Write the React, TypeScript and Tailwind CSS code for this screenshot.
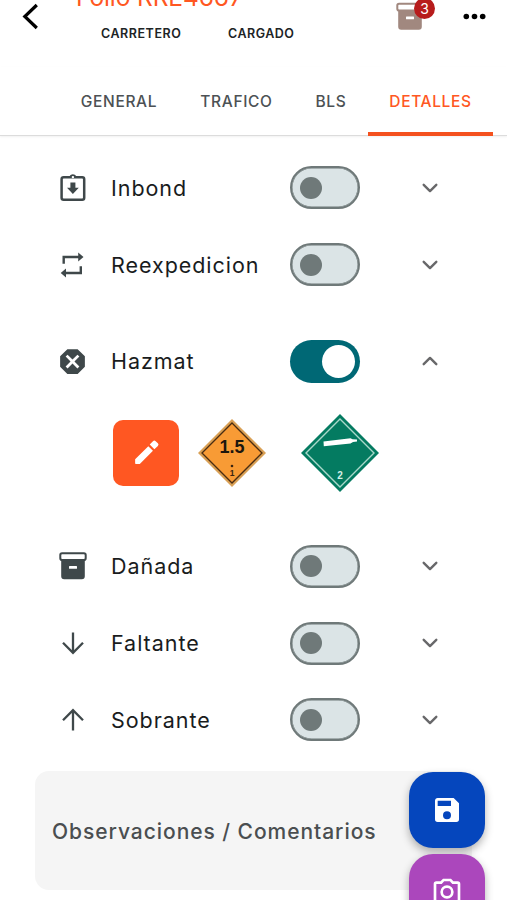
import { useState, type ReactNode } from 'react';

type SectionKey = 'inbond' | 'reexpedicion' | 'hazmat' | 'danada' | 'faltante' | 'sobrante';

const TABS = [
  { label: 'GENERAL', box: 'w-[127px] pl-[1px]' },
  { label: 'TRAFICO', box: 'w-[108px] pl-[1px]' },
  { label: 'BLS', box: 'w-[78px] pl-[4px]' },
  { label: 'DETALLES', box: 'w-[125px]' },
];

function ArchiveIcon({ className }: { className: string }) {
  return (
    <svg viewBox="0 0 28 28" className={className} fill="none">
      <rect x="1.300" y="1.300" width="25.400" height="6.800" rx="1.800" stroke="currentColor" strokeWidth="2" fill="white" />
      <path d="M2.200 8.500h23.600v15.700a3 3 0 0 1-3 3H5.200a3 3 0 0 1-3-3z" fill="currentColor" />
      <rect x="10" y="14" width="8" height="2.800" rx=".5" fill="white" />
    </svg>
  );
}

function InbondIcon() {
  return (
    <svg viewBox="0 0 28 30" className="h-[30px] w-7" fill="none">
      <rect x="2.600" y="4.300" width="22.600" height="22.400" rx="2" stroke="currentColor" strokeWidth="2.500" />
      <path d="M9.800 4.700C10.500 3.300 11 2.300 12 1.700a4 4 0 0 1 3.800 0c1 .6 1.500 1.600 2.200 3z" fill="currentColor" />
      <circle cx="13.900" cy="4.100" r="1.200" fill="white" />
      <path d="M11.400 9.500h5v5.300h3.400l-5.900 6.200L8 14.800h3.400z" fill="currentColor" />
    </svg>
  );
}

function RepeatIcon() {
  return (
    <svg viewBox="0 0 28 28" className="h-7 w-7" fill="currentColor">
      <path d="M3.500 4.800h15.700V1.500L24.500 6l-5.300 4.500V7.200H5.900v5.600H3.500zM23 23.200H7v3.300L1.700 22 7 17.500v3.300h13.600v-5.600H23z" />
    </svg>
  );
}

function OctagonIcon() {
  return (
    <svg viewBox="0 0 24 24" className="h-[33px] w-[33px]" fill="currentColor">
      <path d="M8.270 3L3 8.270v7.460L8.270 21h7.460L21 15.730V8.270L15.730 3M8.410 7L12 10.590 15.590 7 17 8.410 13.410 12 17 15.590 15.590 17 12 13.410 8.410 17 7 15.590 10.590 12 7 8.410" />
    </svg>
  );
}

function ArrowIcon({ up }: { up?: boolean }) {
  return (
    <svg viewBox="0 0 28 28" className={up ? 'h-7 w-7 rotate-180' : 'h-7 w-7'} fill="none" stroke="currentColor" strokeWidth="2.300">
      <path d="M14 3.500V23.500M4 13.800l10 10 10-10" />
    </svg>
  );
}

function Chevron({ open }: { open: boolean }) {
  return (
    <svg
      viewBox="0 0 20 20"
      className={open ? 'size-5 rotate-180' : 'size-5'}
      fill="none"
      stroke="#68686a"
      strokeWidth="2.400"
      strokeLinecap="round"
      strokeLinejoin="round"
    >
      <path d="M3.700 6.800L10 13.100l6.300-6.300" />
    </svg>
  );
}

function Toggle({ on, onChange }: { on: boolean; onChange: () => void }) {
  return (
    <button
      role="switch"
      aria-checked={on}
      onClick={onChange}
      className={
        on
          ? 'flex h-[43px] w-[70px] items-center justify-end rounded-full bg-[#006875] pr-[5px]'
          : 'flex h-[43px] w-[70px] items-center rounded-full border-2 border-[#6f7979] bg-[#dbe4e6] pl-[8px] shadow-[inset_0_0_0_0.5px_#6f7979]'
      }
    >
      <span className={on ? 'size-[33px] rounded-full bg-white' : 'size-[22px] rounded-full bg-[#6f7979]'} />
    </button>
  );
}

type RowProps = {
  icon: ReactNode;
  label: string;
  on: boolean;
  onToggle: () => void;
};

function Row({ icon, label, on, onToggle }: RowProps) {
  return (
    <div className="flex h-[76.7px] items-center">
      <span className="ml-14 flex w-[33px] justify-center text-[#3f484a]">{icon}</span>
      <span className="ml-[22px] w-[179px] text-[21.5px] leading-7 tracking-[0.95px] text-[#191c1d]">{label}</span>
      <Toggle on={on} onChange={onToggle} />
      <span className="ml-[60px]">
        <Chevron open={on} />
      </span>
    </div>
  );
}

function ExplosivePlacard() {
  return (
    <svg viewBox="0 0 70 70" className="size-[70px] font-['Liberation_Sans',sans-serif]">
      <path d="M35 1L69 35 35 69 1 35z" fill="#d9a055" />
      <path d="M35 5L65 35 35 65 5 35z" fill="#f89b35" stroke="#4b2d12" strokeWidth="1.300" />
      <text x="35" y="35" textAnchor="middle" fontSize="18" fontWeight="700" fill="#1c160e">1.5</text>
      <circle cx="35" cy="48" r="1.300" fill="#3a2410" />
      <text x="35" y="57.500" textAnchor="middle" fontSize="8.500" fontWeight="700" fill="#3a2410">1</text>
    </svg>
  );
}

function GasPlacard() {
  return (
    <svg viewBox="0 0 80 80" className="size-20 font-['Liberation_Sans',sans-serif]">
      <path d="M40 1L79 40 40 79 1 40z" fill="#047b61" />
      <path d="M40 6L74 40 40 74 6 40z" fill="none" stroke="#a9d8ca" strokeWidth="1.400" />
      <path d="M23.500 28.500L50.500 25.300l2 1 4.500.3v2l-4 .5-2.500 1.500-26.700 2.600z" fill="white" />
      <text x="40" y="65.500" textAnchor="middle" fontSize="10" fontWeight="700" fill="#d5efe7">2</text>
    </svg>
  );
}

export default function App() {
  const [active, setActive] = useState('DETALLES');
  const [flags, setFlags] = useState<Record<SectionKey, boolean>>({
    inbond: false,
    reexpedicion: false,
    hazmat: true,
    danada: false,
    faltante: false,
    sobrante: false,
  });

  function toggle(key: SectionKey) {
    setFlags((f) => ({ ...f, [key]: !f[key] }));
  }

  return (
    <main className="relative h-[900px] w-[507px] overflow-hidden bg-white font-['Inter',sans-serif]">
      <header className="flex h-[67px] items-start">
        <button className="mt-[2px] ml-[18px] w-[58px]">
          <svg viewBox="0 0 24 30" className="h-[30px] w-6" fill="none" stroke="black" strokeWidth="3.200">
            <path d="M18.800 3L6.800 14.500l12 11.500" />
          </svg>
        </button>
        <div className="w-[320px]">
          {/* the title is scrolled halfway out of the view */}
          <h1 className="-mt-[20px] whitespace-nowrap text-[24.5px] leading-[34px] tracking-[-0.1px] text-[#ff5722]">Folio RRE4667</h1>
          <div className="mt-[10px] flex text-[12.5px] leading-5 font-semibold text-[#202425]">
            <span className="ml-[25px] w-[127px] tracking-[0.55px]">CARRETERO</span>
            <span className="tracking-[0.5px]">CARGADO</span>
          </div>
        </div>
        <div className="relative mt-[2px] w-[50px] text-[#a1887f]">
          <ArchiveIcon className="h-[29px] w-7" />
          <span className="absolute -top-[4px] left-[18px] flex size-[21px] items-center justify-center rounded-full bg-[#b71c1c] text-[14px] text-white">
            3
          </span>
        </div>
        <svg viewBox="0 0 24 8" className="mt-[12px] ml-[17px] h-2 w-6">
          <circle cx="3.300" cy="4.500" r="2.800" />
          <circle cx="11.500" cy="4.500" r="2.800" />
          <circle cx="19.700" cy="4.500" r="2.800" />
        </svg>
      </header>

      <nav className="flex h-[69px] border-b border-[#dcdcdc] pl-[55px] shadow-[0_1px_2px_rgba(0,0,0,0.06)]">
        {TABS.map((t) => (
          <button
            key={t.label}
            onClick={() => setActive(t.label)}
            className={`flex flex-col items-center ${t.box} ${active === t.label ? 'text-[#ff5722]' : 'text-[#4c5154]'}`}
          >
            <span className="mt-[25px] text-[15.5px] leading-5 font-medium tracking-[0.65px]">{t.label}</span>
            {active === t.label && <span className="mt-[20px] h-1 w-[125px] shrink-0 bg-[#f4511e]" />}
          </button>
        ))}
      </nav>

      <section className="pt-[13.6px]">
        <Row icon={<InbondIcon />} label="Inbond" on={flags.inbond} onToggle={() => toggle('inbond')} />
        <Row icon={<RepeatIcon />} label="Reexpedicion" on={flags.reexpedicion} onToggle={() => toggle('reexpedicion')} />
        <div className="mt-5">
          <Row icon={<OctagonIcon />} label="Hazmat" on={flags.hazmat} onToggle={() => toggle('hazmat')} />
          <div className="flex h-[107px] items-center pb-[1px] pl-[113px]">
            <button className="flex size-[66px] items-center justify-center rounded-[10px] bg-[#ff5722]">
              <svg viewBox="0 0 24 24" className="size-[31px]" fill="white">
                <path d="M3.200 17.300v3.100c0 .3.200.5.500.5h3.100L17 10.700 13.400 7.100zM20.800 7a1.500 1.500 0 0 0 0-2.100l-1.700-1.700a1.500 1.500 0 0 0-2.100 0L14.500 5.900 18.100 9.500z" />
              </svg>
            </button>
            <div className="ml-[18px]">
              <ExplosivePlacard />
            </div>
            <div className="ml-[33px]">
              <GasPlacard />
            </div>
          </div>
        </div>
        <div className="mt-[21.4px]">
          <Row icon={<ArchiveIcon className="size-7" />} label="Dañada" on={flags.danada} onToggle={() => toggle('danada')} />
          <Row icon={<ArrowIcon />} label="Faltante" on={flags.faltante} onToggle={() => toggle('faltante')} />
          <Row icon={<ArrowIcon up />} label="Sobrante" on={flags.sobrante} onToggle={() => toggle('sobrante')} />
        </div>
      </section>

      <div className="mt-[13px] ml-[35px] flex h-[119px] w-[437px] items-center rounded-[14px] bg-[#f5f5f5] pt-[2px] pl-[17px] text-[21px] font-[450] tracking-[0.95px] text-[#4a4e50]">
        Observaciones / Comentarios
      </div>

      <div className="absolute top-[772px] left-[409px] flex flex-col gap-[6px]">
        <button className="flex size-[76px] items-center justify-center rounded-[24px] bg-[#0546bd] shadow-[0_4px_8px_rgba(0,0,0,0.3)]">
          <svg viewBox="0 0 24 24" className="size-8" fill="white">
            <path d="M15 9H5V5h10M12 19a3 3 0 0 1-3-3 3 3 0 0 1 3-3 3 3 0 0 1 3 3 3 3 0 0 1-3 3M17 3H5c-1.110 0-2 .9-2 2v14a2 2 0 0 0 2 2h14a2 2 0 0 0 2-2V7l-4-4z" />
          </svg>
        </button>
        <button className="flex size-[76px] items-center justify-center rounded-[24px] bg-[#ab47bc] shadow-[0_4px_8px_rgba(0,0,0,0.3)]">
          <svg viewBox="0 0 24 24" className="size-8" fill="white">
            <path d="M20 4h-3.170L15 2H9L7.170 4H4a2 2 0 0 0-2 2v12a2 2 0 0 0 2 2h16a2 2 0 0 0 2-2V6a2 2 0 0 0-2-2m0 14H4V6h4.050l1.830-2h4.240l1.830 2H20v12M12 7a5 5 0 0 0-5 5 5 5 0 0 0 5 5 5 5 0 0 0 5-5 5 5 0 0 0-5-5m0 8a3 3 0 0 1-3-3 3 3 0 0 1 3-3 3 3 0 0 1 3 3 3 3 0 0 1-3 3z" />
          </svg>
        </button>
      </div>
    </main>
  );
}
